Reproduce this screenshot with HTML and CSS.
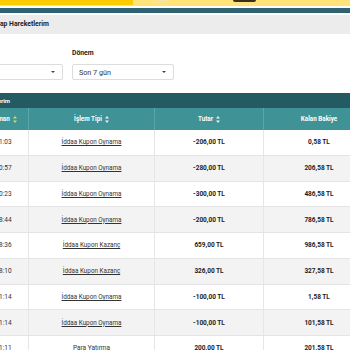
FILE: index.html
```html
<!DOCTYPE html>
<html lang="tr">
  <head>
    <meta charset="UTF-8" />
    <meta name="viewport" content="width=device-width, initial-scale=1.0" />
    <title>Hesap Hareketlerim</title>
    <link rel="stylesheet" href="styles.css">
  </head>
  <body>
    <div class="topbar">
      <div class="topbar-left"></div>
      <div class="topbar-right">
        <div class="topbar-dot"></div>
        <div class="topbar-btn"></div>
      </div>
    </div>
    <div class="topbar-line"></div>
    <div class="navline"></div>

    <div class="page">
      <div class="titlebar">Hesap Hareketlerim</div>

      <div class="filters">
        <div class="filter filter-type">
          <div class="filter-label"></div>
          <div class="select"><span></span><i class="caret"></i></div>
        </div>
        <div class="filter filter-period">
          <div class="filter-label">Dönem</div>
          <div class="select"><span>Son 7 gün</span><i class="caret"></i></div>
        </div>
      </div>

      <div class="panel-head">Hareketlerim</div>

      <div class="grid">
        <div class="row head">
          <div class="cell">Zaman <svg class="sort active" viewBox="0 0 4 7"><path d="M2 0L4 2.6H0Z M2 7L4 4.4H0Z"/></svg></div>
          <div class="cell">İşlem Tipi <svg class="sort" viewBox="0 0 4 7"><path d="M2 0L4 2.6H0Z M2 7L4 4.4H0Z"/></svg></div>
          <div class="cell">Tutar <svg class="sort" viewBox="0 0 4 7"><path d="M2 0L4 2.6H0Z M2 7L4 4.4H0Z"/></svg></div>
          <div class="cell">Kalan Bakiye</div>
        </div>
        <div class="row">
          <div class="cell time">21:03</div>
          <div class="cell"><a href="#">İddaa Kupon Oynama</a></div>
          <div class="cell amount">-206,00 TL</div>
          <div class="cell amount">0,58 TL</div>
        </div>
        <div class="row">
          <div class="cell time">20:57</div>
          <div class="cell"><a href="#">İddaa Kupon Oynama</a></div>
          <div class="cell amount">-280,00 TL</div>
          <div class="cell amount">206,58 TL</div>
        </div>
        <div class="row">
          <div class="cell time">20:23</div>
          <div class="cell"><a href="#">İddaa Kupon Oynama</a></div>
          <div class="cell amount">-300,00 TL</div>
          <div class="cell amount">486,58 TL</div>
        </div>
        <div class="row">
          <div class="cell time">18:44</div>
          <div class="cell"><a href="#">İddaa Kupon Oynama</a></div>
          <div class="cell amount">-200,00 TL</div>
          <div class="cell amount">786,58 TL</div>
        </div>
        <div class="row">
          <div class="cell time">18:36</div>
          <div class="cell"><a href="#">İddaa Kupon Kazanç</a></div>
          <div class="cell amount">659,00 TL</div>
          <div class="cell amount">986,58 TL</div>
        </div>
        <div class="row">
          <div class="cell time">18:10</div>
          <div class="cell"><a href="#">İddaa Kupon Kazanç</a></div>
          <div class="cell amount">326,00 TL</div>
          <div class="cell amount">327,58 TL</div>
        </div>
        <div class="row">
          <div class="cell time">11:14</div>
          <div class="cell"><a href="#">İddaa Kupon Oynama</a></div>
          <div class="cell amount">-100,00 TL</div>
          <div class="cell amount">1,58 TL</div>
        </div>
        <div class="row">
          <div class="cell time">11:14</div>
          <div class="cell"><a href="#">İddaa Kupon Oynama</a></div>
          <div class="cell amount">-100,00 TL</div>
          <div class="cell amount">101,58 TL</div>
        </div>
        <div class="row">
          <div class="cell time">11:11</div>
          <div class="cell">Para Yatırma</div>
          <div class="cell amount">200,00 TL</div>
          <div class="cell amount">201,58 TL</div>
        </div>
      </div>
    </div>
  </body>
</html>
```

FILE: styles.css
```css
/* styles.css */
body {
  margin: 0;
  font-family: Roboto, "Liberation Sans", sans-serif;
  color: #333;
  background: #fff;
  overflow: hidden;
}

.topbar {
  display: flex;
  height: 5px;
}

.topbar-left {
  width: 133px;
  background: #fecb00;
}

.topbar-right {
  flex: 1;
  display: flex;
  background: #ffe47a;
}

.topbar-dot {
  margin-left: 24px;
  width: 10px;
  height: 1px;
  background: #f3e4b0;
}

.topbar-btn {
  margin-left: 66px;
  width: 23px;
  height: 2px;
  background: #3a2f1f;
  border-radius: 0 0 2px 2px;
}

.topbar-line {
  height: 1px;
  background: #ffea4f;
}

.navline {
  margin-top: 2px;
  height: 5px;
  background: #2f6372;
}

.page {
  width: 420px;
  margin-left: -25px;
}

.titlebar {
  margin-top: 2px;
  height: 19px;
  line-height: 19px;
  padding-left: 13px;
  background: #ececec;
  font-size: 6.8px;
  font-weight: 700;
  color: #222;
}

.filters {
  display: flex;
  gap: 9px;
  padding: 15px 0 13px;
}

.filter-type {
  width: 88px;
}

.filter-period {
  width: 102px;
}

.filter-label {
  height: 8px;
  line-height: 8px;
  margin-bottom: 7px;
  font-size: 6.8px;
  font-weight: 700;
  color: #222;
}

.select {
  box-sizing: border-box;
  height: 16px;
  display: flex;
  align-items: center;
  justify-content: space-between;
  padding: 0 7px 0 6px;
  border: 1px solid #dddddd;
  border-radius: 2px;
  font-size: 7.2px;
  color: #333;
}

.caret {
  width: 0;
  height: 0;
  border-left: 2px solid transparent;
  border-right: 2px solid transparent;
  border-top: 2.5px solid #444;
}

.panel-head {
  height: 15px;
  line-height: 15px;
  background: #245a62;
  color: #fff;
  font-size: 6px;
  font-weight: 700;
}

.row {
  display: grid;
  grid-template-columns: 54px 126px 109px 111px;
  box-sizing: border-box;
  height: 25.75px;
  border-bottom: 1px solid #e4e4e4;
}

.row:nth-child(odd) {
  background: #f3f3f3;
}

.row .cell {
  display: flex;
  align-items: center;
  justify-content: center;
  gap: 3px;
  border-right: 1px solid #e6e6e6;
  font-size: 6.5px;
}

.row.head {
  height: 22px;
  background: #3f9396;
  border-bottom: none;
}

.row.head .cell {
  color: #fff;
  font-size: 6.3px;
  font-weight: 700;
  border-right-color: #5aa6a8;
}

.row .time {
  padding-left: 4px;
}

.row.head .cell:first-child {
  padding-left: 4px;
}

.row .cell a {
  color: #333;
  text-decoration: underline;
  font-size: 6.3px;
}

.row .amount {
  font-weight: 700;
  color: #222;
}

.sort {
  width: 4px;
  height: 7px;
  fill: #e8f0f0;
}

.sort.active {
  fill: #c9dc6e;
}
```
